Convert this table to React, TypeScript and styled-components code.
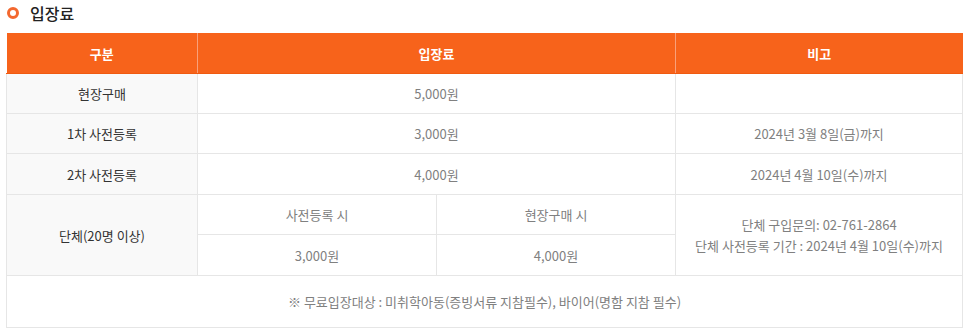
import { createGlobalStyle, styled } from 'styled-components'

const GlobalStyle = createGlobalStyle`
    html, body {
        margin: 0;
        padding: 0;
        background: #fff;
        font-family: "Noto Sans CJK KR", "Noto Sans", sans-serif;
    }
`

type Row = { label: string; price: string; note?: string; tall?: boolean }

const rows: Row[] = [
    { label: '현장구매', price: '5,000원' },
    { label: '1차 사전등록', price: '3,000원', note: '2024년 3월 8일(금)까지' },
    { label: '2차 사전등록', price: '4,000원', note: '2024년 4월 10일(수)까지', tall: true },
]

export default function App(){
    return(
        <Wrapper>
            <GlobalStyle />
            <Title>
                <Dot />
                입장료
            </Title>
            <Table>
                <colgroup>
                    <col style={{ width: 191 }} />
                    <col style={{ width: 239 }} />
                    <col style={{ width: 239 }} />
                    <col style={{ width: 287 }} />
                </colgroup>
                <thead>
                    <tr>
                        <Th>구분</Th>
                        <Th colSpan={2}>입장료</Th>
                        <Th>비고</Th>
                    </tr>
                </thead>
                <tbody>
                    {rows.map((r) => (
                        <Tr key={r.label} $tall={r.tall}>
                            <Label>{r.label}</Label>
                            <Td colSpan={2}>{r.price}</Td>
                            <Td>{r.note}</Td>
                        </Tr>
                    ))}
                    <Tr>
                        <Label rowSpan={2}>단체(20명 이상)</Label>
                        <Td>사전등록 시</Td>
                        <Td>현장구매 시</Td>
                        <Td rowSpan={2}>
                            단체 구입문의: 02-761-2864<br />
                            단체 사전등록 기간 : 2024년 4월 10일(수)까지
                        </Td>
                    </Tr>
                    <Tr $tall>
                        <Td>3,000원</Td>
                        <Td>4,000원</Td>
                    </Tr>
                    <FootRow>
                        <Td colSpan={4}>※ 무료입장대상 : 미취학아동(증빙서류 지참필수), 바이어(명함 지참 필수)</Td>
                    </FootRow>
                </tbody>
            </Table>
        </Wrapper>
    )
}

const Wrapper = styled.div`
    padding: 0 4px 0 6px;
`

const Title = styled.h3`
    display: flex;
    align-items: center;
    gap: 11px;
    margin: 0 0 8px;
    padding: 0 0 0 1px;
    height: 25px;
    font-size: 16px;
    font-weight: 500;
    color: #222;
`

const Dot = styled.span`
    display: block;
    box-sizing: border-box;
    width: 12px;
    height: 12px;
    border-radius: 50%;
    border: 3.5px solid #f3682f;
    background: #fff;
`

const Table = styled.table`
    width: 956px;
    table-layout: fixed;
    border-collapse: collapse;
    font-size: 13px;
    text-align: center;
`

const Th = styled.th`
    height: 40px;
    padding: 0;
    background: #f7631b;
    color: #fff;
    font-weight: 700;
    border-left: 1px solid #f9a07a;
    border-bottom: 1px solid #f05a10;

    &:first-child {
        border-left: none;
    }
`

const Tr = styled.tr<{ $tall?: boolean }>`
    height: ${(p) => (p.$tall ? 41 : 40)}px;
`

const FootRow = styled.tr`
    height: 52px;
`

const Td = styled.td`
    padding: 0;
    color: #808080;
    line-height: 21px;
    border: 1px solid #e6e6e6;
`

const Label = styled(Td)`
    background: #f9f9f9;
    color: #333;
`
